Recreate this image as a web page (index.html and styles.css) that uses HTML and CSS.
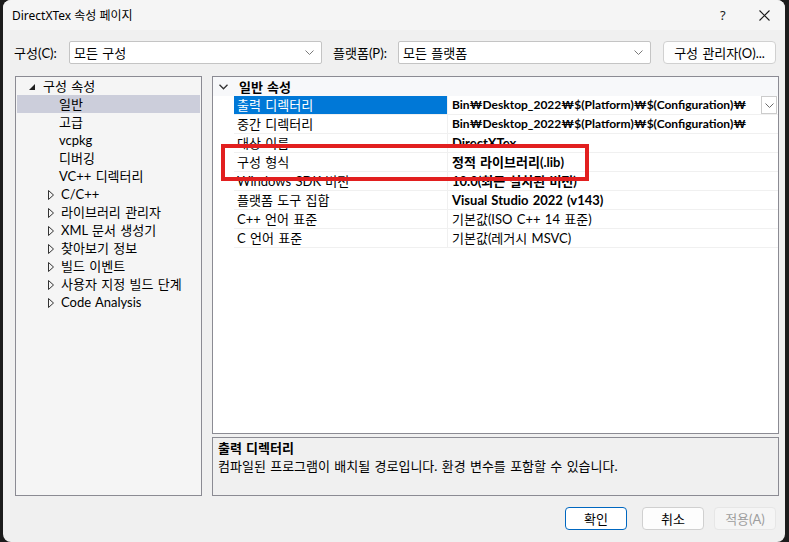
FILE: index.html
```html
<!DOCTYPE html>
<html lang="ko">

<head>
    <meta charset="UTF-8">
    <title>DirectXTex 속성 페이지</title>
    <link rel="stylesheet" href="styles.css">
</head>

<body>
    <div class="dlg">
        <div class="dlg_title">
            <span class="dlg_caption">DirectXTex 속성 페이지</span>
            <span class="dlg_help">?</span>
            <span class="dlg_close">
                <svg width="11" height="11" viewBox="0 0 11 11"><path d="M0.5 0.5L10.5 10.5M10.5 0.5L0.5 10.5" stroke="#1b1b1b" stroke-width="1.1" fill="none"/></svg>
            </span>
        </div>

        <div class="dlg_bar">
            <span class="lbl lbl_cfg">구성(C):</span>
            <div class="combo">
                <span>모든 구성</span>
                <svg class="chev" width="9" height="5" viewBox="0 0 9 5"><path d="M0.5 0.5L4.5 4.5L8.5 0.5" stroke="#7a7a7a" fill="none"/></svg>
            </div>
            <span class="lbl lbl_plat">플랫폼(P):</span>
            <div class="combo">
                <span>모든 플랫폼</span>
                <svg class="chev" width="9" height="5" viewBox="0 0 9 5"><path d="M0.5 0.5L4.5 4.5L8.5 0.5" stroke="#7a7a7a" fill="none"/></svg>
            </div>
            <div class="btn btn_mgr">구성 관리자(O)...</div>
        </div>

        <div class="dlg_main">
            <ul class="tree">
                <li class="tree_root"><i class="tri_open"></i>구성 속성</li>
                <li class="leaf sel">일반</li>
                <li class="leaf">고급</li>
                <li class="leaf">vcpkg</li>
                <li class="leaf">디버깅</li>
                <li class="leaf">VC++ 디렉터리</li>
                <li class="node"><svg class="tri" width="6" height="10" viewBox="0 0 6 10"><path d="M0.5 0.5L5.5 5L0.5 9.5Z" stroke="#333" fill="none"/></svg>C/C++</li>
                <li class="node"><svg class="tri" width="6" height="10" viewBox="0 0 6 10"><path d="M0.5 0.5L5.5 5L0.5 9.5Z" stroke="#333" fill="none"/></svg>라이브러리 관리자</li>
                <li class="node"><svg class="tri" width="6" height="10" viewBox="0 0 6 10"><path d="M0.5 0.5L5.5 5L0.5 9.5Z" stroke="#333" fill="none"/></svg>XML 문서 생성기</li>
                <li class="node"><svg class="tri" width="6" height="10" viewBox="0 0 6 10"><path d="M0.5 0.5L5.5 5L0.5 9.5Z" stroke="#333" fill="none"/></svg>찾아보기 정보</li>
                <li class="node"><svg class="tri" width="6" height="10" viewBox="0 0 6 10"><path d="M0.5 0.5L5.5 5L0.5 9.5Z" stroke="#333" fill="none"/></svg>빌드 이벤트</li>
                <li class="node"><svg class="tri" width="6" height="10" viewBox="0 0 6 10"><path d="M0.5 0.5L5.5 5L0.5 9.5Z" stroke="#333" fill="none"/></svg>사용자 지정 빌드 단계</li>
                <li class="node"><svg class="tri" width="6" height="10" viewBox="0 0 6 10"><path d="M0.5 0.5L5.5 5L0.5 9.5Z" stroke="#333" fill="none"/></svg>Code Analysis</li>
            </ul>

            <div class="side">
                <div class="grid">
                    <div class="grid_head">
                        <svg class="grid_chev" width="9" height="6" viewBox="0 0 9 6"><path d="M0.5 0.8L4.5 4.8L8.5 0.8" stroke="#333" stroke-width="1.3" fill="none"/></svg>
                        <span>일반 속성</span>
                    </div>
                    <div class="row active">
                        <div class="cell_name">출력 디렉터리</div>
                        <div class="cell_val b path">Bin₩Desktop_2022₩$(Platform)₩$(Configuration)₩</div>
                        <div class="drop">
                            <svg width="9" height="5" viewBox="0 0 9 5"><path d="M0.5 0.5L4.5 4.5L8.5 0.5" stroke="#6a6a6a" fill="none"/></svg>
                        </div>
                    </div>
                    <div class="row">
                        <div class="cell_name">중간 디렉터리</div>
                        <div class="cell_val b path">Bin₩Desktop_2022₩$(Platform)₩$(Configuration)₩</div>
                    </div>
                    <div class="row">
                        <div class="cell_name">대상 이름</div>
                        <div class="cell_val b">DirectXTex</div>
                    </div>
                    <div class="row">
                        <div class="cell_name">구성 형식</div>
                        <div class="cell_val b">정적 라이브러리(.lib)</div>
                    </div>
                    <div class="row">
                        <div class="cell_name">Windows SDK 버전</div>
                        <div class="cell_val b">10.0(최근 설치된 버전)</div>
                    </div>
                    <div class="row">
                        <div class="cell_name">플랫폼 도구 집합</div>
                        <div class="cell_val b">Visual Studio 2022 (v143)</div>
                    </div>
                    <div class="row">
                        <div class="cell_name">C++ 언어 표준</div>
                        <div class="cell_val">기본값(ISO C++ 14 표준)</div>
                    </div>
                    <div class="row">
                        <div class="cell_name">C 언어 표준</div>
                        <div class="cell_val">기본값(레거시 MSVC)</div>
                    </div>
                    <div class="mark"></div>
                </div>
                <div class="desc">
                    <div class="desc_title">출력 디렉터리</div>
                    <div class="desc_text">컴파일된 프로그램이 배치될 경로입니다. 환경 변수를 포함할 수 있습니다.</div>
                </div>
            </div>
        </div>

        <div class="dlg_foot">
            <div class="btn btn_ok">확인</div>
            <div class="btn btn_cancel">취소</div>
            <div class="btn btn_apply">적용(A)</div>
        </div>
    </div>
</body>

</html>
```

FILE: styles.css
```css
html,body,ul,li,div {
    padding: 0;
    margin: 0;
    box-sizing: border-box;
}
ul {
    list-style: none;
}
body {
    width: 789px;
    height: 542px;
    overflow: hidden;
    background-color: #1c1c1c;
    font-family: "Lato", "Noto Sans", "Noto Sans CJK KR", sans-serif;
    font-size: 13px;
    word-spacing: 1px;
    color: #000;
}
.dlg {
    width: 782px;
    height: 542px;
    margin-left: 3px;
    background-color: #f0f0f0;
    border-radius: 8px;
    overflow: hidden;
}
.dlg_title {
    height: 30px;
    display: flex;
    align-items: center;
    padding-left: 9px;
    background-color: #f5f5f5;
    font-family: "Noto Sans", "Noto Sans CJK KR", sans-serif;
    font-size: 12px;
    word-spacing: 0;
}
.dlg_caption {
    flex: 1;
}
.dlg_help {
    width: 7px;
    font-size: 13px;
    margin-right: 32px;
    color: #1b1b1b;
}
.dlg_close {
    width: 11px;
    margin-right: 15px;
    display: flex;
    align-items: center;
}
.dlg_bar {
    display: flex;
    align-items: center;
    height: 22px;
    margin-top: 11px;
    padding-left: 11px;
}
.lbl_cfg {
    width: 55px;
}
.lbl_plat {
    width: 65px;
    margin-left: 11px;
}
.combo {
    width: 253px;
    height: 23px;
    background-color: #fff;
    border: 1px solid #c4c4c4;
    border-radius: 2px;
    display: flex;
    align-items: center;
    padding-left: 4px;
    padding-right: 7px;
}
.combo span {
    flex: 1;
}
.btn {
    height: 23px;
    background-color: #fdfdfd;
    border: 1px solid #d0d0d0;
    border-radius: 4px;
    display: flex;
    align-items: center;
    justify-content: center;
}
.btn_mgr {
    width: 113px;
    margin-left: 12px;
}
.dlg_main {
    display: flex;
    height: 420px;
    margin-top: 13px;
    padding-left: 12px;
}
.tree {
    width: 187px;
    height: 420px;
    background-color: #f5f5f5;
    border: 1px solid #8b8b93;
    padding: 0 1px;
}
.tree li {
    height: 18px;
    line-height: 18px;
    display: flex;
    align-items: center;
    white-space: nowrap;
}
.tree_root {
    padding-left: 12px;
}
.tree .leaf {
    padding-left: 42px;
}
.tree .node {
    padding-left: 31px;
}
.tree .sel {
    background-color: #cccedb;
}
.tri_open {
    width: 0;
    height: 0;
    border-left: 6px solid transparent;
    border-bottom: 6px solid #1e1e1e;
    margin-right: 8px;
    margin-top: 2px;
}
.tri {
    margin-right: 7px;
    margin-top: 1px;
}
.side {
    width: 567px;
    margin-left: 10px;
    display: flex;
    flex-direction: column;
}
.grid {
    height: 358px;
    background-color: #fff;
    border: 1px solid #8b8b93;
    position: relative;
}
.grid_head {
    height: 19px;
    display: flex;
    align-items: center;
    background-color: #f7f8fa;
    font-weight: bold;
}
.grid_chev {
    margin-left: 6px;
    margin-right: 11px;
}
.row {
    height: 19px;
    margin-left: 21px;
    display: flex;
    border-bottom: 1px solid #f0f0f0;
}
.cell_name {
    width: 214px;
    flex-shrink: 0;
    padding-left: 3px;
    line-height: 18px;
    border-right: 1px solid #f0f0f0;
    white-space: nowrap;
}
.cell_val {
    flex: 1;
    padding-left: 4px;
    line-height: 18px;
    white-space: nowrap;
}
.cell_val.b {
    font-weight: bold;
}
.cell_val.path {
    font-size: 12px;
}
.row.active .cell_name {
    background-color: #0078d7;
    color: #fff;
}
.drop {
    width: 16px;
    height: 18px;
    flex-shrink: 0;
    margin-right: 1px;
    border: 1px solid #cccccc;
    background-color: #fff;
    display: flex;
    align-items: center;
    justify-content: center;
}
.mark {
    position: absolute;
    left: 8px;
    top: 67px;
    width: 368px;
    height: 37px;
    border: 4px solid #e21f1f;
}
.desc {
    height: 59px;
    margin-top: 3px;
    border: 1px solid #8b8b93;
    background-color: #f0f0f0;
    padding: 1px 5px;
}
.desc_title {
    font-weight: bold;
    line-height: 18px;
}
.desc_text {
    line-height: 19px;
}
.dlg_foot {
    display: flex;
    justify-content: flex-end;
    margin-top: 11px;
    padding-right: 9px;
}
.btn_ok {
    width: 62px;
    border: 1px solid #0067c0;
    background-color: #fff;
}
.btn_cancel {
    width: 62px;
    margin-left: 15px;
}
.btn_apply {
    width: 62px;
    margin-left: 10px;
    color: #9d9d9d;
    background-color: #f5f5f5;
    border-color: #e6e6e6;
}
```
